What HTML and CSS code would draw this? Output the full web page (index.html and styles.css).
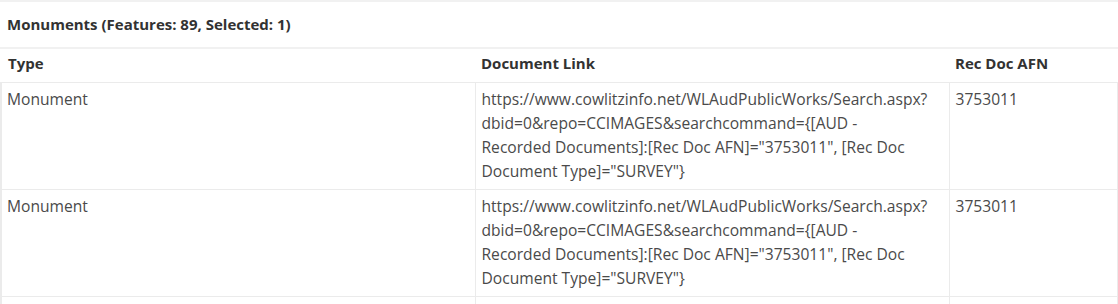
FILE: index.html
```html
<!DOCTYPE html>
<html lang="en">
<head>
  <meta charset="UTF-8">
  <title>Monuments</title>
  <link rel="stylesheet" href="styles.css">
</head>
<body>
  <div class="panel">
    <div class="panel_title">Monuments (Features: 89, Selected: 1)</div>
    <table class="attr_table">
      <thead>
        <tr>
          <th class="col_type">Type</th>
          <th class="col_link">Document Link</th>
          <th class="col_afn">Rec Doc AFN</th>
        </tr>
      </thead>
      <tbody>
        <tr>
          <td>Monument</td>
          <td>https://www.cowlitzinfo.net/WLAudPublicWorks/Search.aspx?dbid=0&amp;repo=CCIMAGES&amp;searchcommand={[AUD - Recorded&nbsp;Documents]:[Rec Doc AFN]="3753011", [Rec Doc Document Type]="SURVEY"}</td>
          <td>3753011</td>
        </tr>
        <tr>
          <td>Monument</td>
          <td>https://www.cowlitzinfo.net/WLAudPublicWorks/Search.aspx?dbid=0&amp;repo=CCIMAGES&amp;searchcommand={[AUD - Recorded&nbsp;Documents]:[Rec Doc AFN]="3753011", [Rec Doc Document Type]="SURVEY"}</td>
          <td>3753011</td>
        </tr>
        <tr>
          <td>Monument</td>
          <td>https://www.cowlitzinfo.net/WLAudPublicWorks/Search.aspx?dbid=0&amp;repo=CCIMAGES&amp;searchcommand={[AUD - Recorded&nbsp;Documents]:[Rec Doc AFN]="3753011", [Rec Doc Document Type]="SURVEY"}</td>
          <td>3753011</td>
        </tr>
      </tbody>
    </table>
  </div>
</body>
</html>
```

FILE: styles.css
```css
body {
  margin: 0;
  font-family: "Open Sans", Arial, sans-serif;
  background-color: #fff;
  color: #4a4a4a;
  overflow: hidden;
}

.panel {
  border-top: 2px solid #f1f1f1;
}

.panel_title {
  height: 45px;
  line-height: 44px;
  padding: 0 7px;
  font-size: 15px;
  font-weight: bold;
  color: #323232;
  border-bottom: 2px solid #f1f1f1;
}

.attr_table {
  width: 100%;
  border-collapse: collapse;
  table-layout: fixed;
}

.attr_table th {
  text-align: left;
  font-size: 15px;
  font-weight: bold;
  color: #323232;
  height: 28px;
  padding: 0 6px 5px 6px;
  vertical-align: middle;
}

.attr_table th.col_type {
  padding-left: 7px;
}

.col_type { width: 461px; }
.col_link { width: 462px; }

.attr_table td {
  font-size: 15.6px;
  line-height: 24px;
  padding: 4px 6px 6px 6px;
  vertical-align: top;
  border: 1px solid #ebebeb;
  word-wrap: break-word;
}

.attr_table tr td:first-child {
  border-left: 2px solid #ebebeb;
  padding-left: 5px;
}
```
